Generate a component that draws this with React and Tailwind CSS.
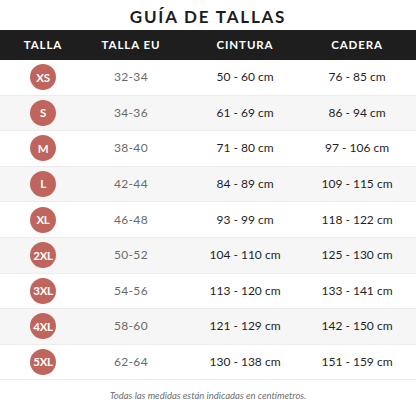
import React from "react";

const rows = [
  ["XS", "32-34", "50 - 60 cm", "76 - 85 cm"],
  ["S", "34-36", "61 - 69 cm", "86 - 94 cm"],
  ["M", "38-40", "71 - 80 cm", "97 - 106 cm"],
  ["L", "42-44", "84 - 89 cm", "109 - 115 cm"],
  ["XL", "46-48", "93 - 99 cm", "118 - 122 cm"],
  ["2XL", "50-52", "104 - 110 cm", "125 - 130 cm"],
  ["3XL", "54-56", "113 - 120 cm", "133 - 141 cm"],
  ["4XL", "58-60", "121 - 129 cm", "142 - 150 cm"],
  ["5XL", "62-64", "130 - 138 cm", "151 - 159 cm"],
];

const grid = "grid grid-cols-[86px_90px_138px_86px_16px] items-center";

export default function App() {
  return (
    <div className="w-[416px] h-[416px] bg-white font-['Lato','Liberation_Sans',sans-serif] overflow-hidden">
      <div className="h-[30px] flex items-center justify-center pt-[2px]">
        <h1 className="text-[17px] font-bold tracking-[1.8px] text-[#1c1c1c] leading-none">GUÍA DE TALLAS</h1>
      </div>
      <div className={`${grid} h-[30px] bg-[#1e1e1e] text-white text-[11.5px] font-bold tracking-[0.9px]`}>
        <div className="text-center">TALLA</div>
        <div className="text-center">TALLA EU</div>
        <div className="text-center">CINTURA</div>
        <div className="text-center">CADERA</div>
        <div />
      </div>
      {rows.map((r, i) => (
        <div
          key={r[0]}
          className={`${grid} h-[35.6px] border-b border-[#ececec] ${i % 2 === 1 ? "bg-[#f6f6f6]" : "bg-white"}`}
        >
          <div className="flex justify-center">
            <div className="w-[26px] h-[26px] rounded-full bg-[#c0655d] text-white text-[11.5px] font-bold flex items-center justify-center leading-none tracking-[-0.3px]">
              {r[0]}
            </div>
          </div>
          <div className="text-center text-[12px] text-[#6a6a6a] tracking-[0.3px]">{r[1]}</div>
          <div className="text-center text-[12px] text-[#1f1f1f]">{r[2]}</div>
          <div className="text-center text-[12px] text-[#1f1f1f]">{r[3]}</div>
          <div />
        </div>
      ))}
      <div className="pt-[9px] text-center italic text-[9.5px] text-[#6f6f6f]">
        Todas las medidas están indicadas en centímetros.
      </div>
    </div>
  );
}
